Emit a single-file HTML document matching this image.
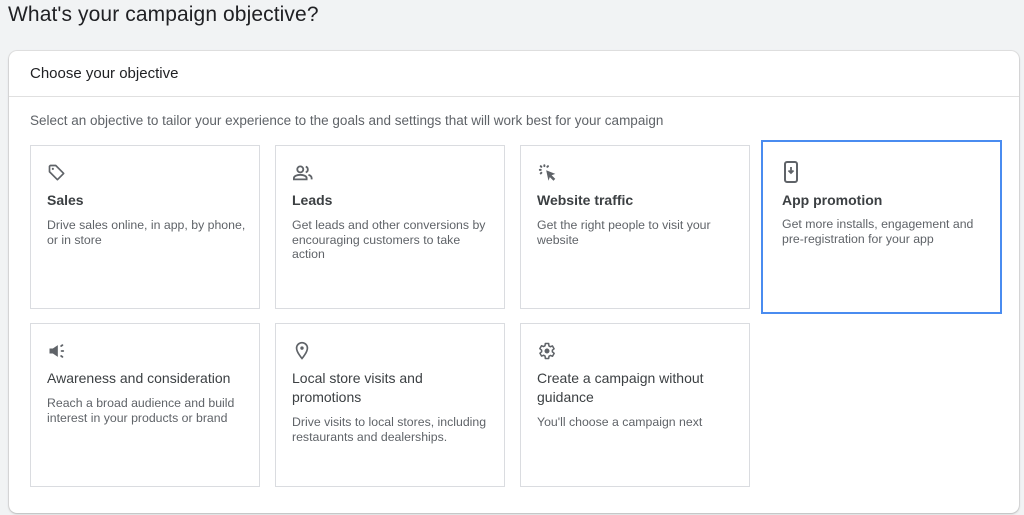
<!DOCTYPE html>
<html><head><meta charset="utf-8"><style>
*{box-sizing:border-box;margin:0;padding:0}
body{width:1024px;height:515px;background:#f1f3f4;font-family:"Liberation Sans",Arial,sans-serif;position:relative;overflow:hidden;color:#3c4043}
h1{position:absolute;left:8px;top:3px;font-size:21px;font-weight:400;color:#202124;letter-spacing:0.1px}
.card{position:absolute;left:9px;top:51px;width:1010px;height:462px;background:#fff;border-radius:8px;box-shadow:0 1px 2px rgba(60,64,67,.25),0 0 0 1px #e3e3e3}
.hd{position:absolute;left:21px;top:14px;font-size:15px;color:#202124}
.div{position:absolute;left:0;right:0;top:45px;border-top:1px solid #e0e0e0}
.sub{position:absolute;left:21px;top:62px;font-size:13.5px;color:#5f6368}
.t{position:absolute;width:230px;height:164px;border:1px solid #dadce0;background:#fff}
.t svg{position:absolute;left:16px;top:17px}
.t .n{position:absolute;left:16px;top:45px;font-size:14px;font-weight:700;color:#3c4043;line-height:19px;white-space:nowrap}
.t .d{position:absolute;left:16px;font-size:12.3px;color:#5f6368;line-height:14.5px;white-space:nowrap}
.t.sel{border:2px solid #4a8cf0}
</style></head><body>
<h1>What's your campaign objective?</h1>
<div class="card">
<div class="hd">Choose your objective</div>
<div class="div"></div>
<div class="sub">Select an objective to tailor your experience to the goals and settings that will work best for your campaign</div>

<div class="t" style="left:21px;top:94px">
<svg width="20" height="20" viewBox="0 0 24 24"><path d="M3 4v6.5l9.5 9.5 7.5-7.5L10.5 3H4z" fill="none" stroke="#5f6368" stroke-width="2" stroke-linejoin="round"/><circle cx="7" cy="7" r="1.3" fill="#5f6368"/></svg>
<div class="n">Sales</div><div class="d" style="top:72px">Drive sales online, in app, by phone,<br>or in store</div></div>

<div class="t" style="left:266px;top:94px">
<svg width="22" height="20" viewBox="0 0 24 22"><circle cx="9" cy="7" r="3.3" fill="none" stroke="#5f6368" stroke-width="2"/><path d="M2 18v-1.5c0-2 3.5-3.5 7-3.5s7 1.5 7 3.5V18z" fill="none" stroke="#5f6368" stroke-width="2"/><path d="M15 4a3.3 3.3 0 010 6.3M18 13c2 .6 3.5 1.8 3.5 3.5V18" fill="none" stroke="#5f6368" stroke-width="2"/></svg>
<div class="n">Leads</div><div class="d" style="top:72px">Get leads and other conversions by<br>encouraging customers to take<br>action</div></div>

<div class="t" style="left:511px;top:94px">
<svg width="22" height="20" viewBox="0 0 24 22"><path d="M10 8l10 4-4 1.5 4 4-2 2-4-4-1.5 4z" fill="#5f6368"/><g stroke="#5f6368" stroke-width="2.2" stroke-linecap="round"><path d="M8 2.5v1M3 7.5h1M4 3.5l.7.7M12 3.5l-.7.7M4 11.5l.7-.7"/></g></svg>
<div class="n">Website traffic</div><div class="d" style="top:72px">Get the right people to visit your<br>website</div></div>

<div class="t sel" style="left:752px;top:89px;width:241px;height:174px">
<svg width="20" height="22" viewBox="0 0 20 22" style="left:18px;top:19px"><rect x="4" y="1" width="12" height="20" rx="2" fill="none" stroke="#5f6368" stroke-width="2"/><path d="M10 6v6M7.5 9.5L10 12l2.5-2.5" fill="none" stroke="#5f6368" stroke-width="1.8"/></svg>
<div class="n" style="left:19px;top:49px">App promotion</div><div class="d" style="left:19px;top:75px">Get more installs, engagement and<br>pre-registration for your app</div></div>

<div class="t" style="left:21px;top:272px">
<svg width="20" height="20" viewBox="0 0 24 24"><path d="M3 9h4l6-4v14l-6-4H3z" fill="#5f6368"/><g stroke="#5f6368" stroke-width="2.2" stroke-linecap="round"><path d="M17 6l1.5-1M17.5 12h2M17 18l1.5 1"/></g></svg>
<div class="n" style="font-weight:400">Awareness and consideration</div><div class="d" style="top:72px">Reach a broad audience and build<br>interest in your products or brand</div></div>

<div class="t" style="left:266px;top:272px">
<svg width="20" height="20" viewBox="0 0 24 24"><path d="M12 2a6.5 6.5 0 00-6.5 6.5C5.5 13.5 12 21 12 21s6.5-7.5 6.5-12.5A6.5 6.5 0 0012 2z" fill="none" stroke="#5f6368" stroke-width="2"/><circle cx="12" cy="8.5" r="2" fill="#5f6368"/></svg>
<div class="n" style="font-weight:400">Local store visits and<br>promotions</div><div class="d" style="top:91px">Drive visits to local stores, including<br>restaurants and dealerships.</div></div>

<div class="t" style="left:511px;top:272px">
<svg width="20" height="20" viewBox="0 0 24 24"><path d="M19.4 13a7.5 7.5 0 000-2l2.1-1.6-2-3.5-2.5 1a7 7 0 00-1.7-1L15 3h-4l-.4 2.7a7 7 0 00-1.7 1l-2.5-1-2 3.5L6.6 11a7.5 7.5 0 000 2l-2.1 1.6 2 3.5 2.5-1a7 7 0 001.7 1L11 21h4l.4-2.7a7 7 0 001.7-1l2.5 1 2-3.5z" fill="none" stroke="#5f6368" stroke-width="1.8" stroke-linejoin="round" transform="translate(-1 0)"/><circle cx="12" cy="12" r="3" fill="#5f6368"/></svg>
<div class="n" style="font-weight:400">Create a campaign without<br>guidance</div><div class="d" style="top:91px">You'll choose a campaign next</div></div>
</div>
</body></html>
